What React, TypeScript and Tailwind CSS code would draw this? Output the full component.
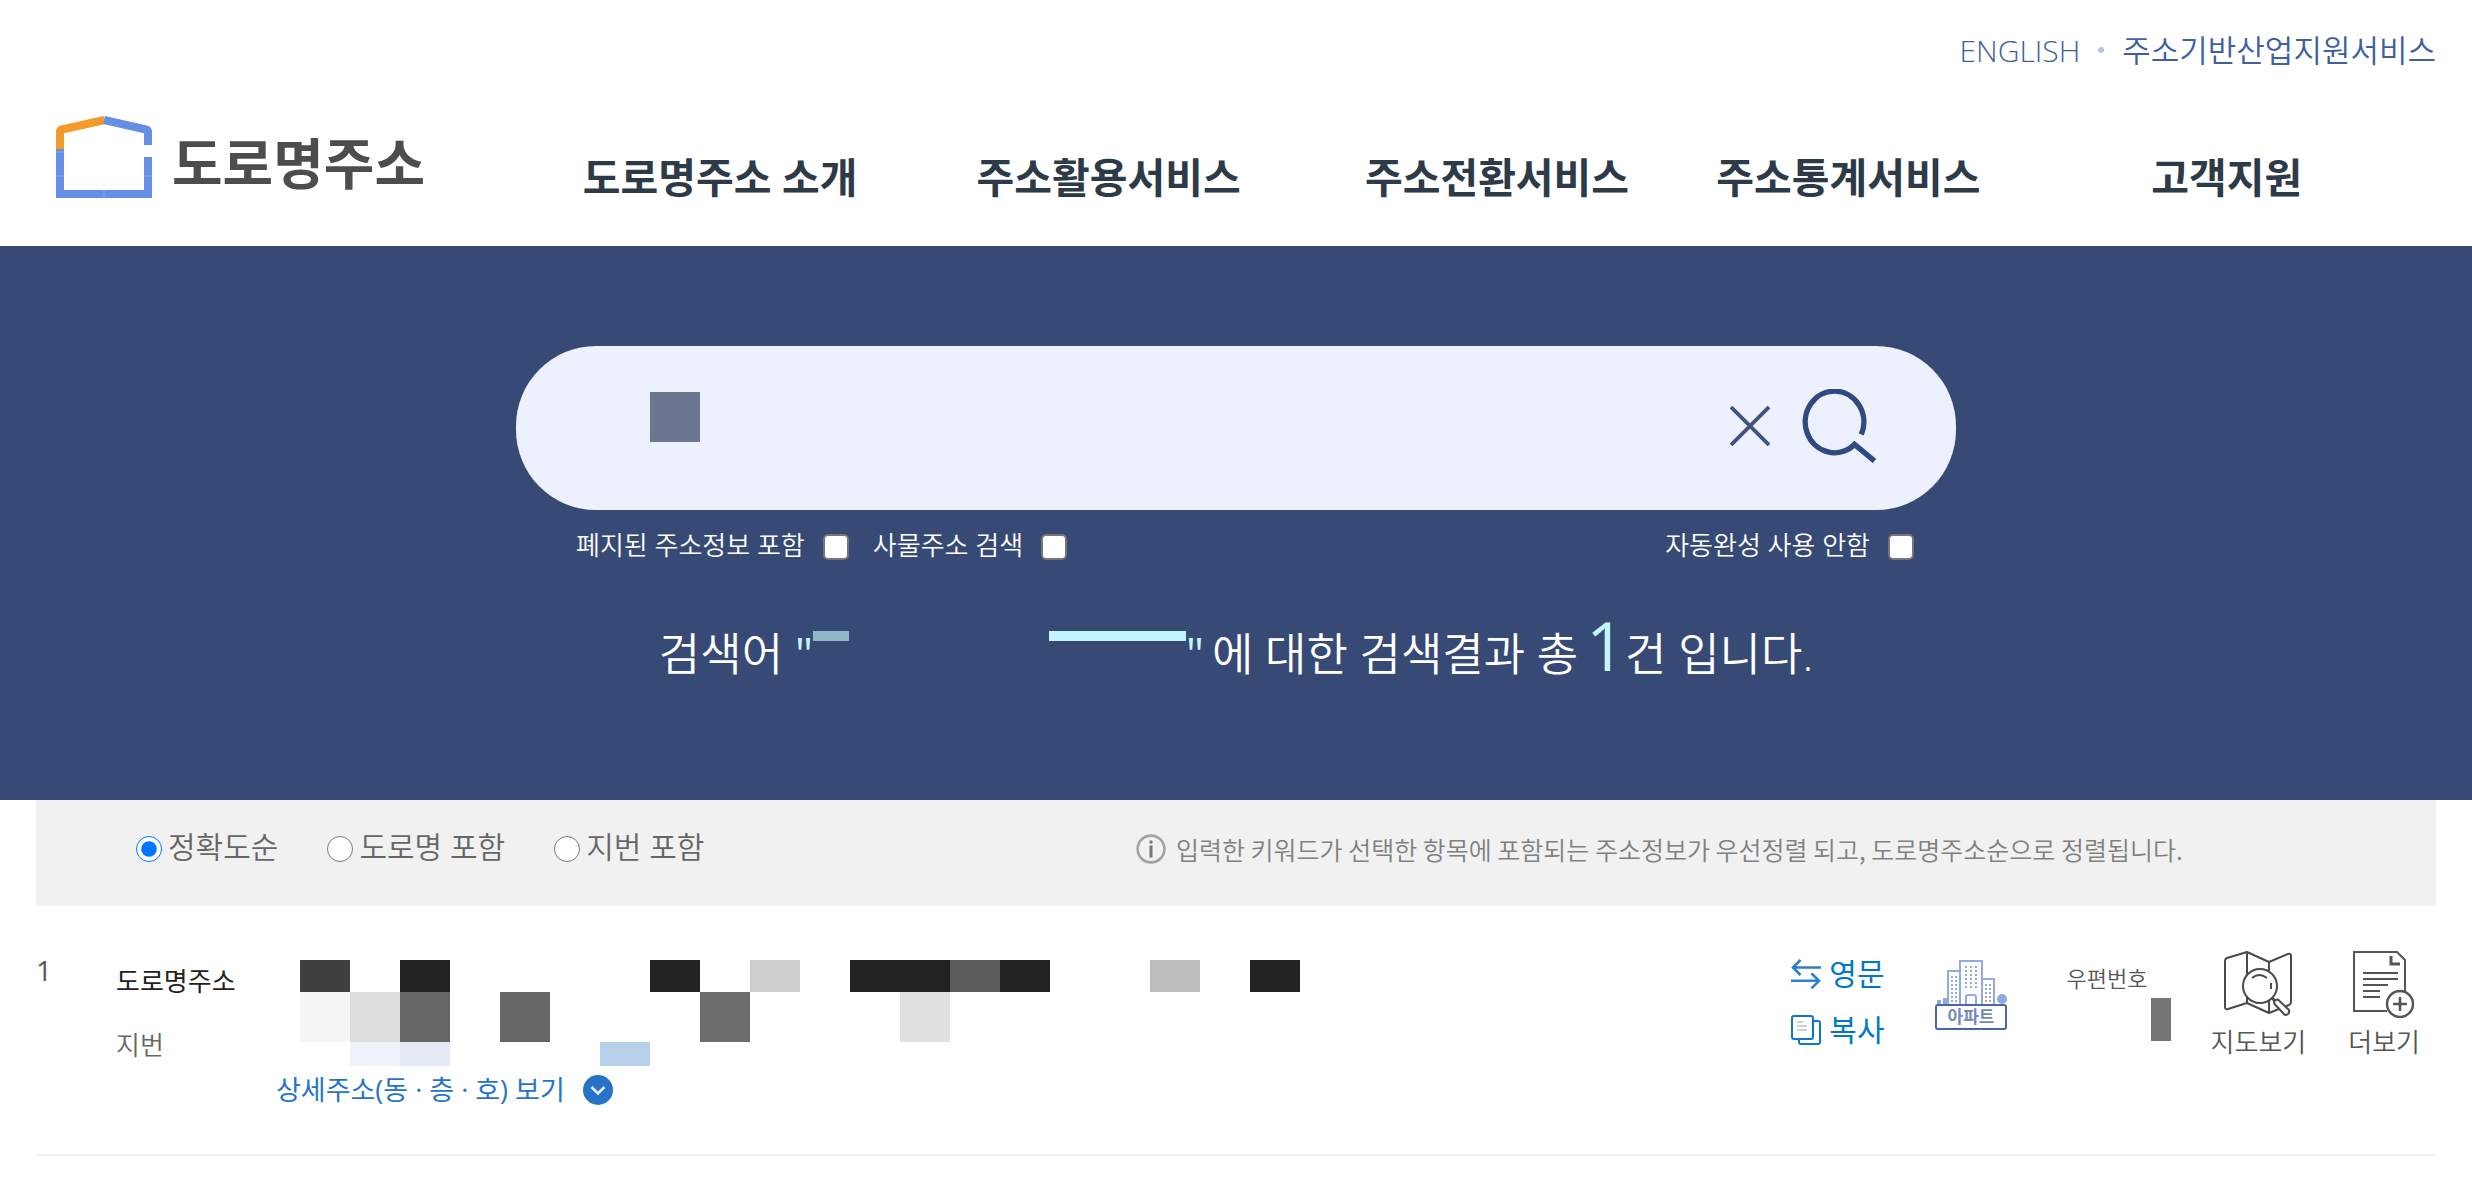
import { useState } from "react";

const NAV_ITEMS = ["도로명주소 소개", "주소활용서비스", "주소전환서비스", "주소통계서비스", "고객지원"];

const SORT_OPTIONS = ["정확도순", "도로명 포함", "지번 포함"];

// Masked address blocks, one entry per 50px cell ("" leaves the cell empty)
const MASK_ROAD = [
  "bg-[#3f3f3f]", "", "bg-[#222222]", "", "", "", "", "bg-[#222222]", "", "bg-[#cecece]",
  "", "bg-[#222222]", "bg-[#222222]", "bg-[#5b5b5b]", "bg-[#222222]", "", "", "bg-[#bcbcbc]", "", "bg-[#222222]",
];
const MASK_JIBUN = [
  "bg-[#f5f5f5]", "bg-[#dedede]", "bg-[#666666]", "", "bg-[#666666]", "", "", "", "bg-[#6d6d6d]", "",
  "", "", "bg-[#e1e1e1]",
];
const MASK_DETAIL = ["", "bg-[#eef3fb]", "bg-[#e4ebf7]", "", "", "", "bg-[#b6cfeb]"];

function MaskRow({ cells, height }: { cells: string[]; height: string }) {
  return (
    <div className={`flex ${height}`}>
      {cells.map((cell, i) => (
        <span key={i} className={`w-[50px] h-full ${cell}`} />
      ))}
    </div>
  );
}

function Logo() {
  return (
    <svg width="96" height="82" viewBox="0 0 96 82" fill="none">
      <path d="M4 33V16Q4 14 6 13.500L48.500 4" stroke="#f29a2a" strokeWidth="8" />
      <path d="M48 4L90 13.500Q92 14 92 16V29" stroke="#648fe4" strokeWidth="8" />
      <path d="M4 33V78H92V41" stroke="#648fe4" strokeWidth="8" />
      <path d="M0 36H8M0 60H8M88 60H96M48 74V82" stroke="#8aabec" strokeWidth="1" />
    </svg>
  );
}

function CloseIcon() {
  return (
    <svg width="40" height="40" viewBox="0 0 40 40" fill="none" stroke="#41557f" strokeWidth="3.8">
      <path d="M1 1L39 39M39 1L1 39" />
    </svg>
  );
}

function SearchIcon() {
  return (
    <svg width="74" height="74" viewBox="0 0 74 74" fill="none" stroke="#2f4a80" strokeWidth="5.4">
      <path d="M59.300 45.500A29.300 30.800 0 1 0 52.500 55.500L72.500 72" />
    </svg>
  );
}

function InfoIcon() {
  return (
    <svg width="30" height="30" viewBox="0 0 30 30" fill="none">
      <circle cx="15" cy="15" r="13.4" stroke="#a3a3a3" strokeWidth="2.6" />
      <circle cx="15" cy="8" r="1.7" fill="#777777" />
      <path d="M15 11.500V23.500" stroke="#777777" strokeWidth="3" />
    </svg>
  );
}

function ChevronCircle() {
  return (
    <svg width="30" height="30" viewBox="0 0 30 30" fill="none">
      <circle cx="15" cy="15" r="15" fill="#2673c8" />
      <path d="M8.500 12L15 18.500L21.500 12" stroke="#e6effa" strokeWidth="2.600" />
    </svg>
  );
}

function SwapIcon() {
  return (
    <svg width="30" height="30" viewBox="0 0 30 30" fill="none" stroke="#2a80d0" strokeWidth="2.6">
      <path d="M30 8.500H2M9.500 1L2 8.500L9.500 16" />
      <path d="M0 21.800H28M20.500 14.300L28 21.800L20.500 29.300" />
    </svg>
  );
}

function CopyIcon() {
  return (
    <svg width="30" height="30" viewBox="0 0 30 30" fill="none" stroke="#0f76cc" strokeWidth="2">
      <rect x="1" y="1" width="21" height="23" rx="2" />
      <path d="M22 6H27A2 2 0 0 1 29 8V27A2 2 0 0 1 27 29H10A2 2 0 0 1 8 27V24" />
      <path d="M6 7H12M6 11H16M6 15H16" stroke="#94a3b8" strokeWidth="1.2" />
    </svg>
  );
}

function ApartmentIcon() {
  return (
    <svg width="72" height="70" viewBox="0 0 72 70" fill="none" stroke="#93a9e0" strokeWidth="2">
      <path d="M25 45V1H47V45M25 11H13V45M47 19H59V45" />
      <path d="M31 45V37A2 2 0 0 1 33 35H39A2 2 0 0 1 41 37V45" />
      <path d="M31 6V30M36 6V30M41 6V30" strokeDasharray="2 2" />
      <path d="M17 16V42M21 16V42M51 24V42M55 24V42" strokeDasharray="2 2" />
      <circle cx="67" cy="39" r="5" fill="#93a9e0" stroke="none" />
      <rect x="2" y="40" width="4" height="5" fill="#93a9e0" stroke="none" />
      <rect x="8" y="38" width="5" height="7" fill="#93a9e0" stroke="none" />
      <rect x="1" y="45" width="70" height="24" rx="2" stroke="#4966a6" fill="white" />
      <text
        x="36"
        y="63"
        textAnchor="middle"
        fontSize="17"
        fontWeight="700"
        fill="#7289bd"
        stroke="none"
        fontFamily="Noto Sans CJK KR, sans-serif"
      >
        아파트
      </text>
    </svg>
  );
}

function MapIcon() {
  return (
    <svg width="70" height="68" viewBox="0 0 70 68" fill="none" stroke="#4a4a4a" strokeWidth="2">
      <path
        d="M24 2L4 8Q2 9 2 11V57Q2 60 5 59L24 53L46 63L66 55Q68 54 68 52V6Q68 3 65 4L46 12L24 2V53M46 12V63"
        strokeLinejoin="round"
      />
      <circle cx="37" cy="36" r="17" fill="white" />
      <path d="M29 28Q36 22 44 28M48 33V39" />
      <path d="M49 48L53 52" strokeWidth="3" />
      <path d="M51.500 54Q50 50 55 49.500L66 60Q67 64 63 65Q61 65 60 63Z" fill="white" strokeLinejoin="round" />
    </svg>
  );
}

function MoreIcon() {
  return (
    <svg width="62" height="68" viewBox="0 0 62 68" fill="none" stroke="#555555" strokeWidth="2">
      <path d="M34 61H1V2H44L52 10V42" />
      <path d="M38 6V14H47" strokeWidth="3" />
      <path d="M10 23H45M10 29H45M10 35H35M10 41H27M10 47H27" />
      <circle cx="47" cy="54" r="13" fill="white" strokeWidth="2.400" />
      <path d="M40 54H54M47 47V61" strokeWidth="2.600" />
    </svg>
  );
}

function HeroCheckbox({ id, label }: { id: string; label: string }) {
  return (
    <div className="flex items-center gap-[18px]">
      <label htmlFor={id} className="text-[26px] leading-9 font-[350]">
        {label}
      </label>
      <input
        id={id}
        type="checkbox"
        className="appearance-none mt-1 size-[26px] rounded-[5px] border-2 border-[#767676] bg-white checked:bg-[#0075ff]"
      />
    </div>
  );
}

export default function App() {
  const [sort, setSort] = useState(SORT_OPTIONS[0]);
  const [keyword, setKeyword] = useState("");

  return (
    <div className="min-h-screen bg-white font-['Open_Sans','Noto_Sans_CJK_KR',sans-serif]">
      {/* Header */}
      <header className="h-[246px] px-6">
        <div className="flex justify-end items-center gap-[14px] h-[100px] pr-3 text-[#3f5f9f] font-[350]">
          <a href="#english" className="text-[30px]">ENGLISH</a>
          <span className="size-[6px] mx-1 rounded-full bg-[#b8c5e8]" />
          <a href="#industry" className="text-[31px]">주소기반산업지원서비스</a>
        </div>
        <div className="flex items-center mt-4">
          <a href="#home" className="flex items-center gap-5 w-[502px] pl-8 pb-[18px]">
            <Logo />
            <span className="pt-3 text-[55px] leading-[70px] font-bold text-[#4d4d4d]">도로명주소</span>
          </a>
          <nav className="flex-1 grid grid-cols-[388fr_388fr_388fr_314fr_442fr] pt-[22px]">
            {NAV_ITEMS.map((item) => (
              <a
                key={item}
                href="#menu"
                className="text-center text-[41px] leading-[56px] font-bold whitespace-nowrap text-[#2d3a47]"
              >
                {item}
              </a>
            ))}
          </nav>
        </div>
      </header>

      {/* Search */}
      <section className="h-[554px] pt-[100px] bg-[#364a75] text-white">
        <div className="w-full max-w-[1440px] mx-auto">
          <form
            onSubmit={(e) => e.preventDefault()}
            className="flex items-center h-[164px] pl-[134px] pr-20 pb-1 rounded-[80px] bg-[#edf1fd]"
          >
            <span className="size-[50px] mb-[18px] bg-[#6c7690]" />
            <input
              type="text"
              aria-label="주소 검색"
              value={keyword}
              onChange={(e) => setKeyword(e.target.value)}
              className="flex-1 min-w-0 h-20 px-3 text-[36px] text-[#364a75] bg-transparent outline-none"
            />
            <button type="button" aria-label="지우기" onClick={() => setKeyword("")} className="mr-8">
              <CloseIcon />
            </button>
            <button type="submit" aria-label="검색">
              <SearchIcon />
            </button>
          </form>

          <div className="flex items-center gap-6 pt-[17px] pl-[60px] pr-[42px]">
            <HeroCheckbox id="closed" label="폐지된 주소정보 포함" />
            <HeroCheckbox id="object" label="사물주소 검색" />
            <div className="ml-auto">
              <HeroCheckbox id="autocomplete" label="자동완성 사용 안함" />
            </div>
          </div>

          <p className="flex justify-center items-baseline pt-[38px] text-[45px] leading-[88px] font-[350] whitespace-nowrap">
            <span>검색어</span>
            <span className="ml-3 font-normal text-[#c3f5ff]">"</span>
            <span className="self-start flex justify-between w-[373px] mt-[30px]">
              <span className="w-9 h-[10px] bg-[#8fb7c9]" />
              <span className="w-[137px] h-[10px] bg-[#c3f5ff]" />
            </span>
            <span className="mr-2 font-normal text-[#c3f5ff]">"</span>
            <span>에 대한 검색결과 총</span>
            <strong className="ml-2 text-[68px] font-normal text-[#c3f5ff]">1</strong>
            <span>건 입니다.</span>
          </p>
        </div>
      </section>

      <main className="px-9">
        {/* Sort options */}
        <div className="flex items-center h-[106px] pl-[100px] pb-3 bg-[#f1f1f1]">
          <fieldset className="flex gap-[49px] w-[1000px]">
            {SORT_OPTIONS.map((option) => (
              <label
                key={option}
                className="flex items-center gap-[6px] text-[30px] leading-10 text-[#666666] font-[350]"
              >
                <input
                  type="radio"
                  name="sort"
                  checked={sort === option}
                  onChange={() => setSort(option)}
                  className="size-[26px] mt-1 accent-[#0075ff]"
                />
                {option}
              </label>
            ))}
          </fieldset>
          <p className="flex items-center gap-[10px] pt-1 font-['Noto_Sans_CJK_KR',sans-serif] text-[25px] leading-9 text-[#808080] font-[350] whitespace-nowrap">
            <InfoIcon />
            입력한 키워드가 선택한 항목에 포함되는 주소정보가 우선정렬 되고, 도로명주소순으로 정렬됩니다.
          </p>
        </div>

        {/* Result row */}
        <article className="flex items-start h-[250px] pt-11 border-b-2 border-[#f0f0f0]">
          <span className="w-20 pt-[2px] text-[28px] leading-9 text-[#555555]">1</span>
          <div className="w-40 pt-[11px] text-[26px] leading-10">
            <p className="text-[#222222]">도로명주소</p>
            <p className="mt-6 font-[350] text-[#666666]">지번</p>
          </div>
          <div className="pt-[10px]">
            <div className="ml-6">
              <MaskRow cells={MASK_ROAD} height="h-8" />
              <MaskRow cells={MASK_JIBUN} height="h-[50px]" />
              <MaskRow cells={MASK_DETAIL} height="h-6" />
            </div>
            <button type="button" className="flex items-center gap-[18px] mt-1 text-[27px] leading-10 text-[#2673c8]">
              상세주소(동 · 층 · 호) 보기
              <ChevronCircle />
            </button>
          </div>

          <div className="flex flex-col gap-4 ml-auto mr-[50px] pt-1 text-[30px] leading-10 text-[#0077c8]">
            <button type="button" className="flex items-center gap-2">
              <SwapIcon />
              영문
            </button>
            <button type="button" className="flex items-center gap-2">
              <CopyIcon />
              복사
            </button>
          </div>
          <div className="pt-[10px] mr-[60px]">
            <ApartmentIcon />
          </div>
          <div className="flex flex-col gap-[2px] w-[104px] mr-10 pt-[10px]">
            <span className="text-[22px] leading-9 font-[350] text-[#555555]">우편번호</span>
            <span className="self-end w-5 h-[43px] bg-[#767676]" />
          </div>
          <button
            type="button"
            className="flex flex-col items-center gap-1 mr-[42px] text-[26px] leading-10 font-[350] text-[#555555]"
          >
            <MapIcon />
            지도보기
          </button>
          <button
            type="button"
            className="flex flex-col items-center gap-1 mr-4 text-[26px] leading-10 font-[350] text-[#555555]"
          >
            <MoreIcon />
            더보기
          </button>
        </article>
      </main>
    </div>
  );
}
